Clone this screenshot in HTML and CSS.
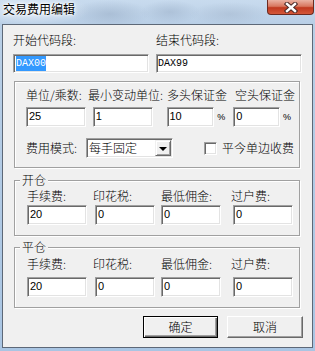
FILE: index.html
```html
<!DOCTYPE html>
<html lang="zh-CN">
<head>
    <meta charset="UTF-8">
    <title>交易费用编辑</title>
    <link rel="stylesheet" href="styles.css">
</head>
<body>
    <div class="window">
        <div class="titlebar">
            <span class="title">交易费用编辑</span>
            <div class="close">
                <svg width="14" height="11" viewBox="0 0 14 11">
                    <path d="M3 2 L11 9 M11 2 L3 9" stroke="#4a2a28" stroke-width="4.4" stroke-linecap="square"/>
                    <path d="M3 2 L11 9 M11 2 L3 9" stroke="#fff" stroke-width="2.4" stroke-linecap="square"/>
                </svg>
            </div>
        </div>

        <div class="client">
            <div class="code-row">
                <div class="code-field code-start">
                    <label>开始代码段:</label>
                    <div class="edit code-edit"><span class="selected">DAX00</span></div>
                </div>
                <div class="code-field code-end">
                    <label>结束代码段:</label>
                    <div class="edit code-edit">DAX99</div>
                </div>
            </div>

            <div class="group group-main">
                <div class="label-row">
                    <span class="lb-unit">单位/乘数:</span>
                    <span class="lb-tick">最小变动单位:</span>
                    <span class="lb-long">多头保证金</span>
                    <span>空头保证金</span>
                </div>
                <div class="input-row">
                    <div class="edit in-unit">25</div>
                    <div class="edit in-tick">1</div>
                    <div class="edit in-long">10</div>
                    <span class="pct">%</span>
                    <div class="edit in-short">0</div>
                    <span class="pct">%</span>
                </div>
                <div class="mode-row">
                    <span class="lb-mode">费用模式:</span>
                    <div class="edit combo">
                        <span class="combo-text">每手固定</span>
                        <span class="combo-btn"><span class="arrow"></span></span>
                    </div>
                    <span class="check"></span>
                    <span class="check-label">平今单边收费</span>
                </div>
            </div>

            <div class="group group-open">
                <span class="legend">开仓</span>
                <div class="fee-row">
                    <div class="cell c1"><label>手续费:</label><div class="edit">20</div></div>
                    <div class="cell c2"><label>印花税:</label><div class="edit">0</div></div>
                    <div class="cell c3"><label>最低佣金:</label><div class="edit">0</div></div>
                    <div class="cell c4"><label>过户费:</label><div class="edit">0</div></div>
                </div>
            </div>

            <div class="group group-close">
                <span class="legend">平仓</span>
                <div class="fee-row">
                    <div class="cell c1"><label>手续费:</label><div class="edit">20</div></div>
                    <div class="cell c2"><label>印花税:</label><div class="edit">0</div></div>
                    <div class="cell c3"><label>最低佣金:</label><div class="edit">0</div></div>
                    <div class="cell c4"><label>过户费:</label><div class="edit">0</div></div>
                </div>
            </div>

            <div class="buttons">
                <div class="btn btn-default">确定</div>
                <div class="btn btn-cancel">取消</div>
            </div>
        </div>
    </div>
</body>
</html>
```

FILE: styles.css
```css
body {
    margin: 0;
    font-family: "Noto Sans CJK SC", sans-serif;
    font-weight: 300;
    font-size: 12px;
    color: #000;
}

.window {
    width: 315px;
    height: 351px;
    box-sizing: border-box;
    padding: 0 2px 3px;
    display: flex;
    flex-direction: column;
    background:
        radial-gradient(ellipse 40px 14px at 110px 14px, rgba(150, 170, 195, 0.5), transparent),
        radial-gradient(ellipse 30px 12px at 170px 12px, rgba(150, 170, 195, 0.45), transparent),
        radial-gradient(ellipse 40px 12px at 230px 14px, rgba(160, 178, 200, 0.45), transparent),
        radial-gradient(ellipse 60px 16px at 30px 10px, rgba(235, 242, 250, 0.8), transparent),
        linear-gradient(#c8dbee, #b9cfe6 24px, #a9c5e3);
}

.titlebar {
    height: 24px;
    display: flex;
}

.title {
    margin: 2px 0 0 1px;
    line-height: 14px;
    font-weight: 400;
    text-shadow: 0 0 5px #fff, 0 0 3px #fff, 0 0 2px #fff;
}

.close {
    width: 47px;
    height: 15px;
    margin-left: auto;
    margin-right: -1px;
    box-sizing: border-box;
    border: 1px solid #6c2a20;
    border-top: none;
    border-radius: 0 0 4px 4px;
    background: linear-gradient(#eab2a3, #d8775f 45%, #c0391f 55%, #d4583a);
    display: flex;
    align-items: center;
    justify-content: center;
}

.client {
    width: 311px;
    height: 324px;
    box-sizing: border-box;
    border: 1px solid #5d6877;
    background: #f0f0f0;
    padding: 8px 0 0 10px;
}

label {
    display: block;
    line-height: 14px;
    white-space: nowrap;
}

.edit {
    box-sizing: border-box;
    height: 20px;
    background: #fff;
    border: 1px solid;
    border-color: #a0a0a0 #fff #fff #a0a0a0;
    box-shadow: inset 1px 1px 0 #696969, inset -1px -1px 0 #e3e3e3;
    padding-left: 2px;
    font-family: "Liberation Sans", Arial, sans-serif;
    font-weight: 400;
    font-size: 11px;
    line-height: 16px;
}

/* code range */
.code-row {
    display: flex;
}

.code-start {
    width: 143px;
}

.code-field label {
    margin-bottom: 7px;
}

.code-start .edit {
    width: 136px;
}

.code-end .edit {
    width: 146px;
}

.code-edit {
    height: 19px;
    font-family: "Liberation Mono", monospace;
    font-size: 10px;
    line-height: 17px;
}

.code-end .code-edit {
    padding-left: 1px;
}

.selected {
    background: #3399ff;
    color: #fff;
    padding: 2px 0;
}

/* group boxes */
.group {
    position: relative;
    width: 286px;
    margin-left: 1px;
    box-sizing: border-box;
    border: 1px solid #a0a0a0;
    box-shadow: inset 1px 1px 0 #fff, 1px 1px 0 #fff;
}

.legend {
    position: absolute;
    top: -8px;
    left: 5px;
    padding: 0 2px;
    line-height: 14px;
    background: #f0f0f0;
}

.group-main {
    margin-top: 8px;
    padding: 6px 0 9px 11px;
}

.label-row {
    display: flex;
    line-height: 14px;
    white-space: nowrap;
}

.lb-unit { width: 62px; }
.lb-tick { width: 79px; }
.lb-long { width: 68px; }

.input-row {
    display: flex;
    margin-top: 5px;
}

.in-unit { width: 60px; }
.in-tick { width: 60px; margin-left: 7px; }
.in-long { width: 48px; margin-left: 14px; }
.in-short { width: 47px; }

.pct {
    width: 16px;
    padding-left: 3px;
    font-family: "Liberation Sans", Arial, sans-serif;
    font-weight: 400;
    font-size: 9px;
    line-height: 20px;
}

.mode-row {
    display: flex;
    align-items: center;
    margin-top: 11px;
}

.lb-mode {
    width: 60px;
    line-height: 14px;
}

.combo {
    width: 87px;
    display: flex;
    padding: 0 1px 0 2px;
}

.combo-text {
    flex: 1;
    font-family: "Noto Sans CJK SC", sans-serif;
    font-weight: 300;
    font-size: 12px;
    line-height: 18px;
}

.combo-btn {
    width: 16px;
    height: 16px;
    margin-top: 1px;
    box-sizing: border-box;
    background: #f0f0f0;
    border: 1px solid;
    border-color: #f0f0f0 #696969 #696969 #f0f0f0;
    box-shadow: inset 1px 1px 0 #fff, inset -1px -1px 0 #a0a0a0;
    display: flex;
    align-items: center;
    justify-content: center;
}

.arrow {
    width: 0;
    height: 0;
    margin-top: 1px;
    border-left: 4px solid transparent;
    border-right: 4px solid transparent;
    border-top: 4px solid #000;
}

.check {
    width: 13px;
    height: 13px;
    margin-left: 31px;
    box-sizing: border-box;
    background: #fff;
    border: 1px solid;
    border-color: #a0a0a0 #fff #fff #a0a0a0;
    box-shadow: inset 1px 1px 0 #696969, inset -1px -1px 0 #e3e3e3;
}

.check-label {
    margin-left: 5px;
    line-height: 14px;
}

/* fee groups */
.group-open {
    margin-top: 12px;
    padding: 8px 0 10px 12px;
}

.group-close {
    margin-top: 11px;
    padding: 9px 0 10px 12px;
}

.fee-row {
    display: flex;
}

.cell .edit {
    width: 60px;
}

.group-open .cell label { margin-bottom: 2px; }
.group-close .cell label { margin-bottom: 6px; }

.c1 { width: 68px; }
.c2 { width: 66px; }
.c3 { width: 72px; }
.c2 label, .c4 label { margin-left: -2px; }

/* buttons */
.buttons {
    display: flex;
    gap: 9px;
    margin-top: 8px;
    padding-left: 130px;
}

.btn {
    height: 22px;
    box-sizing: border-box;
    background: #f0f0f0;
    text-align: center;
    line-height: 20px;
    border: 1px solid;
}

.btn-default {
    width: 75px;
    border-color: #000;
    box-shadow: inset 1px 1px 0 #fff, inset -1px -1px 0 #696969, inset -2px -2px 0 #a0a0a0;
}

.btn-cancel {
    width: 76px;
    border-color: #fff #696969 #696969 #fff;
    box-shadow: inset -1px -1px 0 #a0a0a0, inset 1px 1px 0 #f0f0f0;
}
```
